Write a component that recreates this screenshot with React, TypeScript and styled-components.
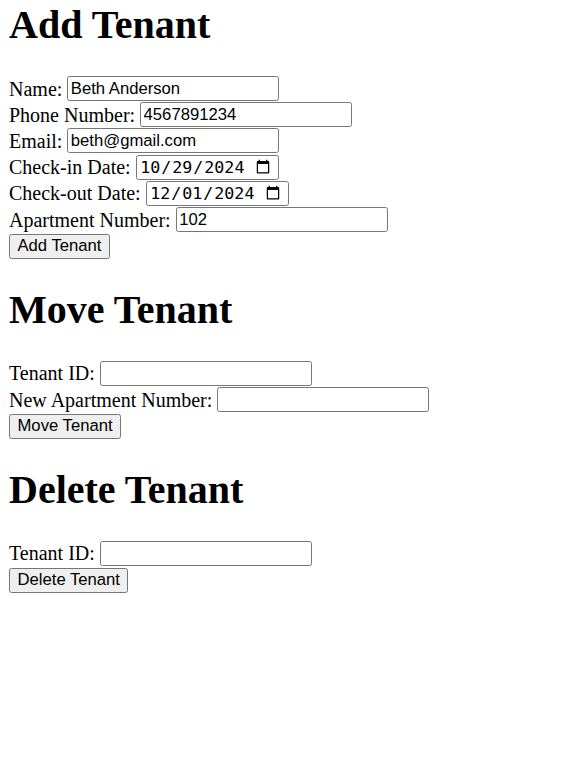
import React from "react";
import styled, { createGlobalStyle } from "styled-components";

const GlobalStyle = createGlobalStyle`
  html, body {
    margin: 0;
    padding: 0;
    background: #ffffff;
  }
  body {
    font-family: "Liberation Serif", "Times New Roman", serif;
    font-size: 20px;
    color: #000000;
  }
`;

const Page = styled.div`
  padding: 2px 9px 0 9px;
  display: flex;
  flex-direction: column;
`;

const Section = styled.section`
  display: flex;
  flex-direction: column;
  & + & {
    margin-top: 28px;
  }
`;

const Title = styled.h1`
  margin: 0 0 27.5px 0;
  font-family: "Liberation Serif", "Times New Roman", serif;
  font-size: 40px;
  font-weight: bold;
  line-height: 46px;
`;

const Form = styled.form`
  display: flex;
  flex-direction: column;
  margin: 0;
`;

const Row = styled.div`
  display: flex;
  align-items: center;
  height: 26.2px;
  gap: 5px;
`;

const Label = styled.label`
  font-family: "Liberation Serif", "Times New Roman", serif;
  font-size: 20px;
  line-height: 23px;
  white-space: nowrap;
  padding-top: 1px;
`;

const Field = styled.input<{ $w?: number; $mono?: boolean }>`
  box-sizing: border-box;
  width: ${(p) => p.$w ?? 212}px;
  height: 25px;
  margin: 0;
  padding: 0 2.5px;
  border: 1px solid #767676;
  border-radius: 2.5px;
  background: #ffffff;
  color: #000000;
  font-family: ${(p) =>
    p.$mono
      ? `"DejaVu Sans Mono", "Liberation Mono", monospace`
      : `"Liberation Sans", Arial, sans-serif`};
  font-size: 16.67px;
  line-height: normal;
  outline: none;

  &::-webkit-calendar-picker-indicator {
    width: 16px;
    height: 17px;
    padding: 0;
    margin: 0 4px 0 0;
    background-size: contain;
  }
`;

const ButtonRow = styled.div`
  display: flex;
  align-items: flex-start;
  height: 26.2px;
`;

const Button = styled.button`
  box-sizing: border-box;
  height: 25px;
  margin: 1px 0 0 0;
  padding: 0 7.5px;
  border: 1px solid #767676;
  border-radius: 2.5px;
  background: #efefef;
  color: #000000;
  font-family: "Liberation Sans", Arial, sans-serif;
  font-size: 16.67px;
  line-height: normal;
  cursor: default;
`;

export default function App() {
  return (
    <Page>
      <GlobalStyle />
      <Section>
        <Title>Add Tenant</Title>
        <Form onSubmit={(e) => e.preventDefault()}>
          <Row>
            <Label htmlFor="name">Name:</Label>
            <Field id="name" type="text" defaultValue="Beth Anderson" />
          </Row>
          <Row>
            <Label htmlFor="phone">Phone Number:</Label>
            <Field id="phone" type="text" defaultValue="4567891234" />
          </Row>
          <Row>
            <Label htmlFor="email">Email:</Label>
            <Field id="email" type="email" defaultValue="beth@gmail.com" />
          </Row>
          <Row>
            <Label htmlFor="checkin">Check-in Date:</Label>
            <Field id="checkin" type="date" $w={143} $mono defaultValue="2024-10-29" />
          </Row>
          <Row>
            <Label htmlFor="checkout">Check-out Date:</Label>
            <Field id="checkout" type="date" $w={143} $mono defaultValue="2024-12-01" />
          </Row>
          <Row>
            <Label htmlFor="apt">Apartment Number:</Label>
            <Field id="apt" type="text" defaultValue="102" />
          </Row>
          <ButtonRow>
            <Button type="submit">Add Tenant</Button>
          </ButtonRow>
        </Form>
      </Section>
      <Section>
        <Title>Move Tenant</Title>
        <Form onSubmit={(e) => e.preventDefault()}>
          <Row>
            <Label htmlFor="moveId">Tenant ID:</Label>
            <Field id="moveId" type="text" />
          </Row>
          <Row>
            <Label htmlFor="newApt">New Apartment Number:</Label>
            <Field id="newApt" type="text" />
          </Row>
          <ButtonRow>
            <Button type="submit">Move Tenant</Button>
          </ButtonRow>
        </Form>
      </Section>
      <Section>
        <Title>Delete Tenant</Title>
        <Form onSubmit={(e) => e.preventDefault()}>
          <Row>
            <Label htmlFor="delId">Tenant ID:</Label>
            <Field id="delId" type="text" />
          </Row>
          <ButtonRow>
            <Button type="submit">Delete Tenant</Button>
          </ButtonRow>
        </Form>
      </Section>
    </Page>
  );
}
